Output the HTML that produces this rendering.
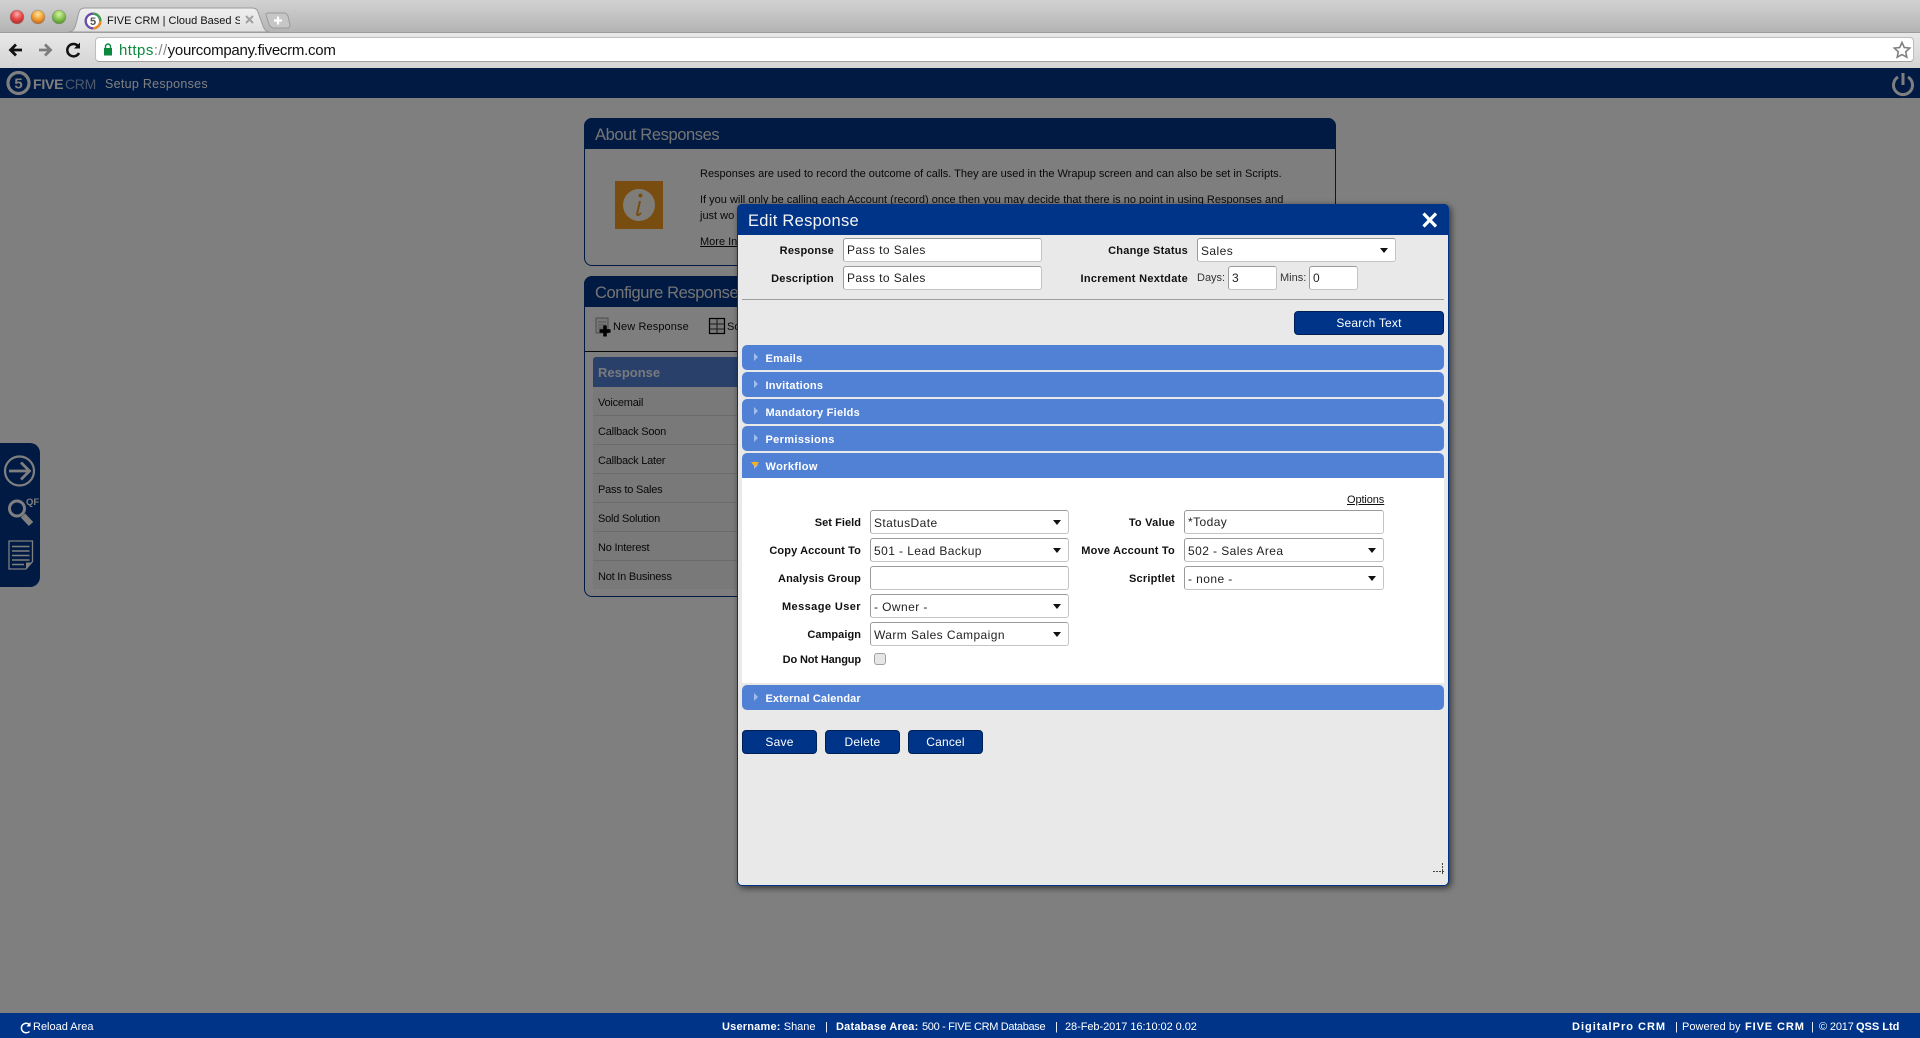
<!DOCTYPE html>
<html><head><meta charset="utf-8"><title>FIVE CRM</title>
<style>
*{box-sizing:border-box}
html,body{margin:0;padding:0;width:1920px;height:1038px;overflow:hidden;background:#fff;font-family:"Liberation Sans",Arial,sans-serif;color:#000}
.a{position:absolute;white-space:nowrap}
.lb{position:absolute;white-space:nowrap;font-weight:bold;font-size:11px;text-align:right;height:14px;line-height:16px;letter-spacing:.22px;color:#111}
.in{position:absolute;background:#fff;border:1px solid #c4c4c4;border-top-color:#9a9a9a;border-left-color:#9a9a9a;border-radius:3px;font-size:12px;line-height:23px;padding-left:3px;letter-spacing:.42px;color:#222;white-space:nowrap;height:24px}
.in.s{line-height:25px}
.in.s:after{content:"";position:absolute;right:7px;top:9px;border-left:4px solid transparent;border-right:4px solid transparent;border-top:5px solid #111}
.bar{position:absolute;left:742px;width:702px;height:25px;background:#5181d5;border-radius:5px;color:#fff;font-weight:bold;font-size:11px;line-height:28px;padding-left:23.5px;letter-spacing:.25px}
.bar:before{content:"";position:absolute;left:12px;top:8px;border-top:4px solid transparent;border-bottom:4px solid transparent;border-left:4px solid #9fc0ee}
.btn{position:absolute;background:#003489;border:1px solid #001f55;border-radius:4px;color:#fff;font-size:12px;text-align:center;height:24px;line-height:22px;letter-spacing:.2px}
.row{position:absolute;left:593px;width:160px;height:29px;font-size:11px;line-height:32px;padding-left:5px;background:#f2f2f2;border-bottom:1px solid #d8d8d8;color:#111;letter-spacing:-.22px}
.f{position:absolute;top:1020px;height:14px;line-height:14px;font-size:11px;color:#fff;white-space:nowrap}
.f b{letter-spacing:.2px}
</style></head><body>

<!-- browser chrome -->
<div class="a" style="left:0;top:0;width:1920px;height:32px;background:linear-gradient(#d2d2d2,#b4b4b4)"></div>
<svg class="a" style="left:0;top:0" width="300" height="34">
<defs>
<radialGradient id="r" cx=".5" cy=".3" r=".7"><stop offset="0" stop-color="#ffb0b0"/><stop offset=".5" stop-color="#e8494a"/><stop offset="1" stop-color="#b02a2a"/></radialGradient>
<radialGradient id="o" cx=".5" cy=".3" r=".7"><stop offset="0" stop-color="#ffe6a0"/><stop offset=".5" stop-color="#f2a43a"/><stop offset="1" stop-color="#c0601a"/></radialGradient>
<radialGradient id="g" cx=".5" cy=".3" r=".7"><stop offset="0" stop-color="#d8f4a8"/><stop offset=".5" stop-color="#8dc755"/><stop offset="1" stop-color="#4f8f2a"/></radialGradient>
<linearGradient id="t" x1="0" y1="0" x2="0" y2="1"><stop offset="0" stop-color="#f0f0f0"/><stop offset="1" stop-color="#dedede"/></linearGradient>
</defs>
<circle cx="17" cy="17" r="7" fill="url(#r)" stroke="#8a8a8a" stroke-width=".5"/>
<circle cx="38" cy="17" r="7" fill="url(#o)" stroke="#8a8a8a" stroke-width=".5"/>
<circle cx="59" cy="17" r="7" fill="url(#g)" stroke="#8a8a8a" stroke-width=".5"/>
<path d="M68 32 C74 32 75 28 77 20 L79 12 C80 9 82 8 85 8 L252 8 C255 8 257 9 258 12 L263 26 C265 31 267 32 270 32 Z" fill="url(#t)" stroke="#9a9a9a"/>
<path d="M266 15 C266 13 267 13 269 13 L284 13 C286 13 287 14 288 16 L290 25 C290 27 289 28 287 28 L274 28 C271 28 270 26 269 24 Z" fill="#c6c6c6" stroke="#9a9a9a"/>
<path d="M278 16.500v8M274 20.500h8" stroke="#fff" stroke-width="2.200"/>
<circle cx="93" cy="21" r="7.300" fill="#fff" stroke="#6a4fa8" stroke-width="2.400"/>
<path d="M93 13.700a7.300 7.300 0 0 1 7.300 7.300" fill="none" stroke="#3da14a" stroke-width="2.400"/>
<path d="M100.300 21a7.300 7.300 0 0 1-7.300 7.300" fill="none" stroke="#ee8a1e" stroke-width="2.400"/>
<text x="93" y="25" font-family="Liberation Sans" font-size="11" font-weight="bold" fill="#555" text-anchor="middle">5</text>
<path d="M246 16l7 7M253 16l-7 7" stroke="#a2a2a2" stroke-width="2"/>
</svg>
<div class="a" style="left:107px;top:13px;width:133px;height:16px;overflow:hidden;font-size:11px;line-height:16px;color:#111">FIVE CRM | Cloud Based Sales</div>

<div class="a" style="left:0;top:32px;width:1920px;height:36px;background:linear-gradient(#e8e8e8,#d4d4d4);border-top:1px solid #9c9c9c"></div>
<svg class="a" style="left:0;top:32px" width="92" height="36">
<path d="M22 18H12M16 12.500l-5.500 5.500 5.500 5.500" fill="none" stroke="#111" stroke-width="2.800"/>
<path d="M39 18H49M45 12.500l5.500 5.500-5.500 5.500" fill="none" stroke="#7d7d7d" stroke-width="2.800"/>
<path d="M78.500 14.500A6.200 6.200 0 1 0 79 21" fill="none" stroke="#111" stroke-width="2.500"/>
<path d="M80 10.500V16.500H74Z" fill="#111"/>
</svg>
<div class="a" style="left:95px;top:37px;width:1819px;height:25px;background:#fff;border:1px solid #bdbdbd;border-bottom-color:#a0a0a0;border-radius:4px"></div>
<svg class="a" style="left:100px;top:42px" width="16" height="16">
<rect x="4" y="6" width="8" height="7.500" fill="#0b8a3d"/>
<path d="M5.500 6V4.500a2.500 2.500 0 0 1 5 0V6" fill="none" stroke="#0b8a3d" stroke-width="1.400"/>
</svg>
<div class="a" style="left:119px;top:42px;height:18px;line-height:18px;font-size:15px;color:#111"><span style="color:#0b8a3d;letter-spacing:.45px">https</span><span style="color:#888;letter-spacing:.45px">://</span><span style="letter-spacing:-.26px">yourcompany.fivecrm.com</span></div>
<svg class="a" style="left:1892px;top:40px" width="20" height="20">
<path d="M10 2.500l2.300 5 5.400.6-4 3.700 1.100 5.400L10 14.500l-4.800 2.700 1.100-5.400-4-3.700 5.400-.6z" fill="#fff" stroke="#808080" stroke-width="1.600"/>
</svg>

<!-- app -->
<div class="a" style="left:0;top:68px;width:1920px;height:30px;background:#003489"></div>
<svg class="a" style="left:0;top:68px" width="40" height="30">
<circle cx="18.500" cy="15" r="10.500" fill="none" stroke="#fff" stroke-width="3.200"/>
<text x="18.500" y="20.500" font-family="Liberation Sans" font-size="15" font-weight="bold" fill="#fff" text-anchor="middle">5</text>
</svg>
<div class="a" style="left:33px;top:75px;line-height:18px;font-size:14px;font-weight:bold;color:#fff;letter-spacing:-.2px">FIVE</div>
<div class="a" style="left:65px;top:75px;line-height:18px;font-size:14px;color:#9bb0d6;letter-spacing:-.3px">CRM</div>
<div class="a" style="left:105px;top:76px;line-height:17px;font-size:12.500px;color:#fff;letter-spacing:.28px">Setup Responses</div>
<svg class="a" style="left:1890px;top:69px" width="26" height="29">
<path d="M8 8a9.500 9.500 0 1 0 10 0" fill="none" stroke="#fff" stroke-width="3"/>
<path d="M13 4v12" stroke="#fff" stroke-width="3"/>
</svg>

<!-- about panel -->
<div class="a" style="left:584px;top:118px;width:752px;height:148px;background:#fcfcfc;border:1px solid #003489;border-radius:8px"></div>
<div class="a" style="left:584px;top:118px;width:752px;height:31px;background:#003489;border-radius:8px 8px 0 0"></div>
<div class="a" style="left:595px;top:124px;line-height:22px;font-size:16.500px;color:#e8e8e8;letter-spacing:-.4px">About Responses</div>
<div class="a" style="left:615px;top:181px;width:48px;height:48px;background:#f39a1f"></div>
<svg class="a" style="left:615px;top:181px" width="48" height="48">
<circle cx="24" cy="24" r="16" fill="#fff" opacity=".95"/>
<circle cx="25.500" cy="14.500" r="2" fill="#f39a1f"/>
<path d="M25 20l-3 13c0 2 2 1 4-1" fill="none" stroke="#f39a1f" stroke-width="2"/>
</svg>
<div class="a" style="left:700px;top:167px;line-height:14px;font-size:11px;color:#111">Responses are used to record the outcome of calls. They are used in the Wrapup screen and can also be set in Scripts.</div>
<div class="a" style="left:700px;top:193px;line-height:14px;font-size:11px;color:#111">If you will only be calling each Account (record) once then you may decide that there is no point in using Responses and</div>
<div class="a" style="left:700px;top:209px;line-height:14px;font-size:11px;color:#111">just wo</div>
<div class="a" style="left:700px;top:235px;line-height:14px;font-size:11px;color:#111;text-decoration:underline">More Info</div>

<!-- configure panel -->
<div class="a" style="left:584px;top:276px;width:300px;height:321px;background:#fcfcfc;border:1px solid #003489;border-radius:8px"></div>
<div class="a" style="left:584px;top:276px;width:300px;height:31px;background:#003489;border-radius:8px 8px 0 0"></div>
<div class="a" style="left:595px;top:282px;line-height:22px;font-size:16.500px;color:#e8e8e8;letter-spacing:-.4px">Configure Responses</div>
<svg class="a" style="left:594px;top:316px" width="140" height="22">
<rect x="2" y="2" width="12" height="15" fill="#eee" stroke="#999"/>
<path d="M4 6h8M4 9h8M4 12h8" stroke="#aaa"/>
<path d="M11 9.500v11M5.500 15h11" stroke="#000" stroke-width="3.500"/>
<rect x="115.500" y="2.500" width="15" height="15" fill="#eee" stroke="#000" stroke-width="1.200"/>
<path d="M116 8h14M116 13h14M123 3v14" stroke="#333"/>
</svg>
<div class="a" style="left:613px;top:320px;line-height:14px;font-size:11px;color:#111;letter-spacing:.1px">New Response</div>
<div class="a" style="left:727px;top:320px;line-height:14px;font-size:11px;color:#111">So</div>
<div class="a" style="left:585px;top:350.500px;width:160px;height:1px;background:#111"></div>
<div class="a" style="left:593px;top:357px;width:160px;height:30px;background:#5181d5;color:#fff;font-weight:bold;font-size:13px;line-height:32px;padding-left:5px;border-radius:3px 0 0 0"><span style="opacity:.9">Response</span></div>
<div class="row" style="top:387px">Voicemail</div>
<div class="row" style="top:416px">Callback Soon</div>
<div class="row" style="top:445px">Callback Later</div>
<div class="row" style="top:474px">Pass to Sales</div>
<div class="row" style="top:503px">Sold Solution</div>
<div class="row" style="top:532px">No Interest</div>
<div class="row" style="top:561px;border-bottom:0;height:28px">Not In Business</div>

<!-- left dock -->
<div class="a" style="left:0;top:443px;width:40px;height:144px;background:#003489;border-radius:0 10px 10px 0"></div>
<svg class="a" style="left:0;top:443px" width="40" height="144">
<circle cx="19.500" cy="28" r="14.500" fill="none" stroke="#fff" stroke-width="2.200"/>
<path d="M9 28H29M21 19.500l8.500 8.500-8.500 8.500" fill="none" stroke="#fff" stroke-width="2.800"/>
<circle cx="17" cy="65.500" r="7.500" fill="none" stroke="#fff" stroke-width="3"/>
<path d="M23 72.500l8 8.500" stroke="#fff" stroke-width="6"/>
<text x="26" y="62" font-family="Liberation Sans" font-size="9.500" font-weight="bold" fill="#fff">QF</text>
<path d="M9 98H32.500V118.500L26 126H9Z" fill="none" stroke="#fff" stroke-width="1.300"/>
<path d="M12 103.500H29.500M12 108H29.500M12 112.500H29.500M12 117H29.500M12 121.500H24" stroke="#fff" stroke-width="1.600"/>
<path d="M26 126V119.500H32.500Z" fill="#fff"/>
</svg>

<!-- dim overlay -->
<div class="a" style="left:0;top:68px;width:1920px;height:945px;background:rgba(0,0,0,.5)"></div>

<!-- modal -->
<div class="a" style="left:737px;top:204px;width:712px;height:682px;background:#e9e9e9;border:1px solid #003489;border-radius:5px;box-shadow:2px 2px 7px rgba(0,0,0,.6)"></div>
<div class="a" style="left:737px;top:204px;width:712px;height:31px;background:#003489;border-radius:5px 5px 0 0"></div>
<div class="a" style="left:748px;top:210px;line-height:22px;font-size:16.500px;color:#f4f4f4;letter-spacing:.28px">Edit Response</div>
<svg class="a" style="left:1420px;top:210px" width="20" height="20"><path d="M3.500 3.500l12.500 13M16 3.500l-12.500 13" stroke="#fff" stroke-width="3.200"/></svg>

<div class="lb" style="right:1086px;top:243px">Response</div>
<div class="in" style="left:843px;top:238px;width:199px">Pass to Sales</div>
<div class="lb" style="right:1086px;top:271px">Description</div>
<div class="in" style="left:843px;top:266px;width:199px">Pass to Sales</div>
<div class="lb" style="right:732px;top:243px">Change Status</div>
<div class="in s" style="left:1197px;top:238px;width:199px">Sales</div>
<div class="lb" style="right:732px;top:271px;letter-spacing:.3px">Increment Nextdate</div>
<div class="a" style="left:1197px;top:271px;line-height:14px;font-size:11px;color:#333">Days:</div>
<div class="in" style="left:1228px;top:266px;width:49px">3</div>
<div class="a" style="left:1280px;top:271px;line-height:14px;font-size:11px;color:#333">Mins:</div>
<div class="in" style="left:1309px;top:266px;width:49px">0</div>
<div class="a" style="left:742px;top:298.500px;width:702px;height:1px;background:#9e9e9e"></div>
<div class="btn" style="left:1294px;top:311px;width:150px">Search Text</div>

<div class="bar" style="top:345px">Emails</div>
<div class="bar" style="top:372px">Invitations</div>
<div class="bar" style="top:399px">Mandatory Fields</div>
<div class="bar" style="top:426px;letter-spacing:.35px">Permissions</div>
<div class="a" style="left:742px;top:478px;width:702px;height:205px;background:#fff"></div>
<div class="bar" style="top:453px;border-radius:5px 5px 0 0;letter-spacing:.38px">Workflow</div>
<svg class="a" style="left:751px;top:462px" width="8" height="6"><path d="M0 0H8L4 5Z" fill="#f6b21b"/></svg>

<div class="a" style="left:1347px;top:493px;line-height:14px;font-size:11px;color:#111;text-decoration:underline;letter-spacing:-.1px">Options</div>

<div class="lb" style="right:1059px;top:515px;letter-spacing:.05px">Set Field</div>
<div class="in s" style="left:870px;top:510px;width:199px">StatusDate</div>
<div class="lb" style="right:1059px;top:543px;letter-spacing:.12px">Copy Account To</div>
<div class="in s" style="left:870px;top:538px;width:199px">501 - Lead Backup</div>
<div class="lb" style="right:1059px;top:571px;letter-spacing:.12px">Analysis Group</div>
<div class="in" style="left:870px;top:566px;width:199px"></div>
<div class="lb" style="right:1059px;top:599px;letter-spacing:.42px">Message User</div>
<div class="in s" style="left:870px;top:594px;width:199px">- Owner -</div>
<div class="lb" style="right:1059px;top:627px;letter-spacing:.05px">Campaign</div>
<div class="in s" style="left:870px;top:622px;width:199px">Warm Sales Campaign</div>
<div class="lb" style="right:1059px;top:652px;letter-spacing:-.13px">Do Not Hangup</div>
<div class="a" style="left:874px;top:653px;width:12px;height:12px;background:#e6e6e6;border:1px solid #a0a0a0;border-radius:3px"></div>

<div class="lb" style="right:745px;top:515px">To Value</div>
<div class="in" style="left:1184px;top:510px;width:200px">*Today</div>
<div class="lb" style="right:745px;top:543px">Move Account To</div>
<div class="in s" style="left:1184px;top:538px;width:200px">502 - Sales Area</div>
<div class="lb" style="right:745px;top:571px">Scriptlet</div>
<div class="in s" style="left:1184px;top:566px;width:200px">- none -</div>

<div class="bar" style="top:685px;letter-spacing:.1px">External Calendar</div>
<div class="btn" style="left:742px;top:730px;width:75px">Save</div>
<div class="btn" style="left:825px;top:730px;width:75px">Delete</div>
<div class="btn" style="left:908px;top:730px;width:75px">Cancel</div>
<svg class="a" style="left:1432px;top:862px" width="14" height="14"><path d="M1 9.500H12.500M10.500 1V13" stroke="#444" stroke-width="1" stroke-dasharray="2 1"/></svg>

<!-- footer -->
<div class="a" style="left:0;top:1013px;width:1920px;height:25px;background:#003489"></div>
<svg class="a" style="left:19px;top:1021px" width="14" height="14"><path d="M10.500 3.500A4.800 4.800 0 1 0 10.500 10.500" fill="none" stroke="#fff" stroke-width="1.500"/><path d="M11.500 1V5.500H7.500Z" fill="#fff"/></svg>
<div class="f" style="left:33px">Reload Area</div>
<div class="f" style="left:722px"><b>Username:</b> Shane</div>
<div class="f" style="left:825px">|</div>
<div class="f" style="left:836px"><b>Database Area:</b></div>
<div class="f" style="left:922px;letter-spacing:-.33px">500 - FIVE CRM Database</div>
<div class="f" style="left:1055px">|</div>
<div class="f" style="left:1065px;letter-spacing:-.06px">28-Feb-2017 16:10:02 0.02</div>
<div class="f" style="left:1572px;font-weight:bold;letter-spacing:1px">DigitalPro CRM</div>
<div class="f" style="left:1675px">|</div>
<div class="f" style="left:1682px;letter-spacing:.05px">Powered by</div>
<div class="f" style="left:1745px;font-weight:bold;letter-spacing:.9px">FIVE CRM</div>
<div class="f" style="left:1811px">|</div>
<div class="f" style="left:1819px;letter-spacing:-.15px">© 2017</div>
<div class="f" style="left:1856px;font-weight:bold">QSS Ltd</div>
</body></html>
